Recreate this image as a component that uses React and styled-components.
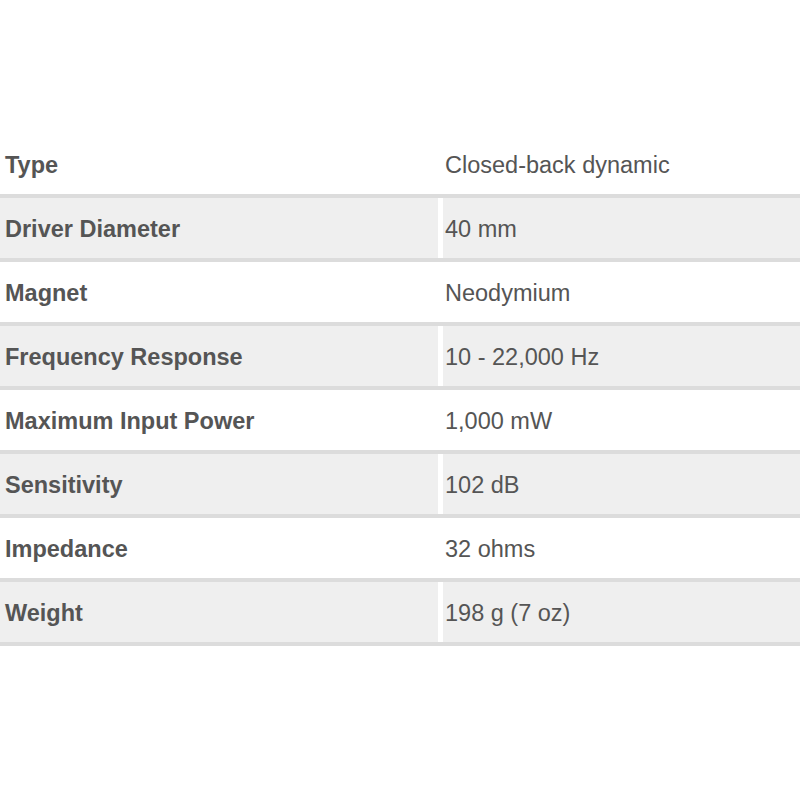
import React from 'react'
import styled, { createGlobalStyle } from 'styled-components'

const GlobalStyle = createGlobalStyle`
    html, body {
        margin: 0;
        padding: 0;
        background: #fff;
    }
    body {
        font-family: "Liberation Sans", Arial, sans-serif;
    }
`

const SpecPage = styled.div`
    width: 800px;
    height: 799px;
    padding-top: 134px;
    box-sizing: border-box;
`

const SpecRow = styled.div`
    display: grid;
    grid-template-columns: 438px 1fr;
    column-gap: 5px;
    height: 60px;
    border-bottom: 4px solid #dcdcdc;
`

const SpecCell = styled.div`
    display: flex;
    align-items: center;
    padding-left: ${p => (p.label ? '5px' : '2px')};
    padding-top: 3px;
    background: ${p => (p.shaded ? '#efefef' : '#fff')};
    color: #555;
    font-size: 23.5px;
    font-weight: ${p => (p.label ? 700 : 400)};
`

const specs = [
    ['Type', 'Closed-back dynamic'],
    ['Driver Diameter', '40 mm'],
    ['Magnet', 'Neodymium'],
    ['Frequency Response', '10 - 22,000 Hz'],
    ['Maximum Input Power', '1,000 mW'],
    ['Sensitivity', '102 dB'],
    ['Impedance', '32 ohms'],
    ['Weight', '198 g (7 oz)'],
]

const App = () => {
    return (
        <SpecPage>
            <GlobalStyle />
            {specs.map(([name, value], i) => (
                <SpecRow key={name}>
                    <SpecCell label shaded={i % 2 === 1}>{name}</SpecCell>
                    <SpecCell shaded={i % 2 === 1}>{value}</SpecCell>
                </SpecRow>
            ))}
        </SpecPage>
    )
}

export default App
